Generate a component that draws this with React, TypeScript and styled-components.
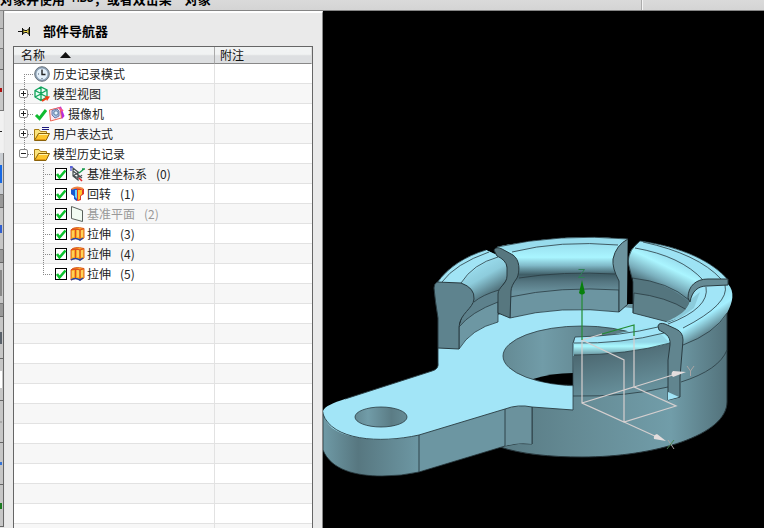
import React from "react";
import styled, { createGlobalStyle } from "styled-components";

const GlobalStyle = createGlobalStyle`
  * { box-sizing: border-box; }
  body {
    margin: 0;
    background: #000;
    color: #222;
    font-family: "Noto Sans CJK SC", sans-serif;
    font-size: 12px;
    line-height: 16px;
  }
`;

const Shell = styled.div`
  display: flex;
  flex-direction: column;
  height: 100vh;
  overflow: hidden;
`;

const PromptBar = styled.header`
  display: flex;
  flex: none;
  height: 11px;
  overflow: hidden;
  background: linear-gradient(#dadada, #d4d4d4);
  border-bottom: 1px solid #858585;
`;

const Prompt = styled.div`
  display: flex;
  align-items: flex-end;
  width: 641px;
  padding-bottom: 3px;
  color: #000;
  font-size: 13px;
  font-weight: 700;
  white-space: pre;
`;

const Divider = styled.div`
  width: 2px;
  background: #f4f4f4;
  border-left: 1px solid #aaa;
`;

const Latin = styled.span`
  font-family: "Liberation Mono", monospace;
  font-size: 12px;
  white-space: pre;
`;

const Workspace = styled.div`
  display: flex;
  flex: 1;
  min-height: 0;
`;

const ToolStrip = styled.nav`
  display: flex;
  flex: none;
  flex-direction: column;
  width: 5px;
  overflow: hidden;
  background: #e6e6e6;
`;

const Tool = styled.button<{ $h: number; $tone: string; $line: string }>`
  display: flex;
  flex: none;
  align-items: center;
  width: 4px;
  height: ${(p) => p.$h}px;
  padding: 0;
  background: ${(p) => p.$tone};
  border: 0;
  border-right: 1px solid ${(p) => p.$line};
  border-bottom: 1px solid ${(p) => p.$line};
`;

const ToolMark = styled.span<{ $h: number; $color: string }>`
  width: 2px;
  height: ${(p) => p.$h}px;
  background: ${(p) => p.$color};
`;

const Navigator = styled.aside`
  display: flex;
  flex: none;
  flex-direction: column;
  width: 318px;
  overflow: hidden;
  background: #eaeaea;
  border-top: 2px solid #fff;
  border-right: 1px solid #888;
`;

const PanelTitle = styled.div`
  display: flex;
  flex: none;
  align-items: center;
  gap: 12px;
  height: 33px;
  padding: 3px 0 0 13px;
`;

const Heading = styled.h1`
  margin: 0;
  color: #000;
  font-size: 13px;
  line-height: 16px;
`;

const PinButton = styled.button`
  display: flex;
  padding: 0;
  background: none;
  border: 0;
`;

const TreeFrame = styled.div`
  flex: 1;
  min-height: 0;
  margin: 0 9px 0 8px;
  overflow: hidden;
  background: #fff;
  border: 1px solid #666;
  border-bottom: 0;
`;

const Tree = styled.table`
  width: 100%;
  table-layout: fixed;
  border-collapse: separate;
  border-spacing: 0;
`;

const HeadCell = styled.th<{ $wide?: boolean }>`
  width: ${(p) => (p.$wide ? "201px" : "auto")};
  height: 17px;
  padding: 0 0 0 ${(p) => (p.$wide ? 7 : 5)}px;
  color: #111;
  font-weight: 400;
  text-align: left;
  background: linear-gradient(#f1f3f3 0 45%, #dddfe1 55% 100%);
  border-right: 1px solid ${(p) => (p.$wide ? "#aaa" : "#ddd")};
  border-bottom: 1px solid #888;
`;

const SortLabel = styled.button`
  display: flex;
  align-items: center;
  gap: 15px;
  height: 16px;
  padding: 0;
  color: inherit;
  font: inherit;
  line-height: 16px;
  background: none;
  border: 0;
`;

const Row = styled.tr`
  background: #fff;
  &:nth-child(even) { background: #f7f7f7; }
`;

const Cell = styled.td<{ $rule?: boolean }>`
  height: 20px;
  padding: 0;
  border-right: ${(p) => (p.$rule ? "1px solid #e2e2e2" : "0")};
  border-bottom: 1px solid #e2e2e2;
`;

const Item = styled.div<{ $muted?: boolean }>`
  display: flex;
  align-items: center;
  height: 19px;
  color: ${(p) => (p.$muted ? "#999" : "#222")};
  white-space: pre;
`;

const FeatureLabel = styled.label`
  display: flex;
  gap: 9px;
`;

const Branch = styled.div<{ $child?: boolean }>`
  display: grid;
  flex: none;
  width: ${(p) => (p.$child ? 41 : 20)}px;
  height: 19px;
  & > * { grid-area: 1 / 1; }
`;

const Expander = styled.button`
  z-index: 1;
  display: flex;
  align-self: center;
  width: 9px;
  height: 9px;
  margin-left: 5px;
  padding: 0;
  background: #fff;
  border: 1px solid #8a8a8a;
  border-radius: 2px;
`;

const IconSlot = styled.span<{ $w: number }>`
  display: flex;
  flex: none;
  width: ${(p) => p.$w}px;
`;

const TickBox = styled.span`
  display: grid;
  flex: none;
  width: 15px;
  & > * { grid-area: 1 / 1; }
  & > svg { pointer-events: none; }
`;

const Check = styled.input`
  appearance: none;
  width: 12px;
  height: 12px;
  margin: 0;
  background: #fff;
  border: 1px solid #000;
`;

const Viewport = styled.main`
  flex: 1;
  min-width: 0;
  overflow: hidden;
  background: #000;
`;

const Scene = styled.svg`
  display: block;
  width: 100%;
  height: 100%;
`;

type Kind = "clock" | "views" | "camera" | "expr" | "folder" | "csys" | "revolve" | "plane" | "extrude";

function TickMark() {
  return (
    <svg width="12" height="12" viewBox="0 0 12 12">
      <path d="M2 6L4.500 9.500L10.500 2.500" fill="none" stroke="#0cc42c" strokeWidth="2.600" />
    </svg>
  );
}

function Folder() {
  return (
    <>
      <path d="M.5 14V3.500H5L6.500 5.500H12.500V9" fill="#fbe47e" stroke="#a87a10" />
      <path d="M.5 14.500L4.500 7.500H15.500L12 14.500Z" fill="#fdc52c" stroke="#8b6108" />
      <path d="M5 8.500H14" stroke="#fff2a8" />
      <path d="M2 13.500H11.500" stroke="#e29a14" />
    </>
  );
}

const art: Record<Kind, React.ReactNode> = {
  clock: (
    <>
      <circle cx="8" cy="8" r="7.300" fill="#8fa3b8" stroke="#68737d" />
      <circle cx="8" cy="8" r="5.500" fill="#e4f0fa" />
      <path d="M8 3.500V8.500H11.500" fill="none" stroke="#222" strokeWidth="1.400" />
      <path d="M4 8H5M8 12V13" stroke="#456" />
    </>
  ),
  views: (
    <>
      <path d="M1 4.500L7 1L13 4V11L7 14.500L1 11ZM1 4.500L7 7.500L13 4M7 1V14M1 11L7 8L13 11" fill="#e8fff3" stroke="#10a35b" strokeWidth="1.300" />
      <path d="M8 15L13 12" stroke="#f33c14" strokeWidth="2" />
      <path d="M11 10L16 10.500L13 15Z" fill="#f33c14" />
    </>
  ),
  camera: (
    <>
      <path d="M4 3L12 .5L15.500 10L13 13Z" fill="#b52be0" />
      <path d="M.5 4L11 1.500L12.500 12L1.500 15Z" fill="#fae6ee" stroke="#ef6654" />
      <path d="M3 4.500L8 3L10 5V10L6 12L3 9Z" fill="#a9c5e7" stroke="#6f78a8" />
      <circle cx="7" cy="7" r="2.200" fill="#e6f4ff" stroke="#58799f" />
      <path d="M10 2L14 5" stroke="#f84f92" strokeWidth="2" />
    </>
  ),
  expr: (
    <>
      <Folder />
      <path d="M8 1.500H15M8 3.500H15" stroke="#1c1a80" />
    </>
  ),
  folder: <Folder />,
  csys: (
    <>
      <path d="M3 2L8 6V14L3 10ZM3 10L9 6M3 5L12 12M4 10Q9 13 12 9" fill="none" stroke="#454d51" strokeWidth="1.200" />
      <path d="M1 0V5M0 1H3" stroke="#2530d0" />
      <path d="M9 7L14 3M12 3H15" stroke="#189b4d" strokeWidth="1.400" />
      <path d="M9 12L12 15" stroke="#e32929" strokeWidth="1.600" />
    </>
  ),
  revolve: (
    <>
      <path d="M1 3Q7 0 14 3V8L11 10V14L8 15L5 14V10L1 8Z" fill="#dc3827" />
      <path d="M1 4Q3 2 7 3V15L4 13V10L1 8Z" fill="#1559d1" />
      <path d="M5 4H7V13L5 11Z" fill="#69d4ff" />
      <path d="M8 4H12V8L10 10V13L8 14Z" fill="#ffc42b" />
      <path d="M2 3Q7 0 13 3" fill="none" stroke="#f18642" strokeWidth="2" />
    </>
  ),
  plane: <path d="M1.500 .5L12.500 4.500V15.500L1.500 12.500Z" fill="#f2fbf2" stroke="#59605b" />,
  extrude: (
    <>
      <path d="M1 4Q4 0 14 2.500V12L10 14Q6 11 1 14Z" fill="#ffba28" stroke="#dd6220" />
      <path d="M5.500 3V12M10 4V13.500M1 4Q5 2 10 4L14 2.500" fill="none" stroke="#dd511e" strokeWidth="1.300" />
      <path d="M3 5V11M8 4V11M12 4V11" stroke="#ffe788" />
      <path d="M1 14Q5 11 10 14L13 12" fill="none" stroke="#1f46ad" strokeWidth="1.500" />
    </>
  ),
};

function NodeIcon({ kind }: { kind: Kind }) {
  return (
    <svg width="16" height="16" viewBox="0 0 16 16">
      {art[kind]}
    </svg>
  );
}

interface TreeNode {
  name: string;
  index?: number;
  kind: Kind;
  child?: boolean;
  state?: "open" | "closed";
  muted?: boolean;
  first?: boolean;
  last?: boolean;
  active?: boolean;
}

const nodes: TreeNode[] = [
  { name: "历史记录模式", kind: "clock", first: true },
  { name: "模型视图", kind: "views", state: "closed" },
  { name: "摄像机", kind: "camera", state: "closed", active: true },
  { name: "用户表达式", kind: "expr", state: "closed" },
  { name: "模型历史记录", kind: "folder", state: "open", last: true },
  { name: "基准坐标系", index: 0, kind: "csys", child: true },
  { name: "回转", index: 1, kind: "revolve", child: true },
  { name: "基准平面", index: 2, kind: "plane", child: true, muted: true },
  { name: "拉伸", index: 3, kind: "extrude", child: true },
  { name: "拉伸", index: 4, kind: "extrude", child: true },
  { name: "拉伸", index: 5, kind: "extrude", child: true, last: true },
];

const blankRows = Array.from({ length: 40 }, (_, i) => i);

function Guide({ node }: { node: TreeNode }) {
  const x = node.child ? 29.5 : 10.5;
  const top = node.first ? 10 : 0;
  const bottom = node.last ? 10 : 19;
  return (
    <svg width={node.child ? 39 : 19} height="19" stroke="#888" strokeDasharray="1 1">
      <path d={`M${x} ${top}V${bottom}`} />
      <path d={`M${x - 0.5} 10.500H${node.child ? 39 : 19}`} />
    </svg>
  );
}

function NodeRow({ node }: { node: TreeNode }) {
  const id = `feature-${node.index}`;
  return (
    <Row>
      <Cell $rule>
        <Item $muted={node.muted}>
          <Branch $child={node.child}>
            <Guide node={node} />
            {node.state && (
              <Expander aria-label={node.name} aria-expanded={node.state === "open"}>
                <svg width="7" height="7" stroke="#222">
                  <path d={node.state === "open" ? "M1 3.500H6" : "M1 3.500H6M3.500 1V6"} />
                </svg>
              </Expander>
            )}
          </Branch>
          {node.child && (
            <TickBox>
              <Check id={id} type="checkbox" defaultChecked />
              <TickMark />
            </TickBox>
          )}
          {node.active && (
            <IconSlot $w={15}>
              <svg width="14" height="14" viewBox="0 0 14 14">
                <path d="M2 8L5.500 11.500L12 3" fill="none" stroke="#10bb30" strokeWidth="3" />
              </svg>
            </IconSlot>
          )}
          <IconSlot $w={node.child ? 17 : 19}>
            <NodeIcon kind={node.kind} />
          </IconSlot>
          {node.child ? (
            <FeatureLabel htmlFor={id}>
              <span>{node.name}</span>
              <span>{`(${node.index})`}</span>
            </FeatureLabel>
          ) : (
            <span>{node.name}</span>
          )}
        </Item>
      </Cell>
      <Cell />
    </Row>
  );
}

const tools = [
  { h: 18, tone: "#bdbdbd", line: "#777" },
  { h: 20, tone: "#c6c6c6", line: "#777" },
  { h: 21, tone: "#bcbcbc", line: "#666" },
  { h: 41, tone: "#c8c8c8", line: "#777", mark: "#b01010", mh: 4 },
  { h: 42, tone: "#f1f1f1", line: "#eee", mark: "#222", mh: 1 },
  { h: 42, tone: "#c9cdd2", line: "#777", mark: "#1668e3", mh: 18 },
  { h: 13, tone: "#999", line: "#666" },
  { h: 42, tone: "#c6c6c6", line: "#777", mark: "#315fd0", mh: 8 },
  { h: 13, tone: "#999", line: "#666" },
  { h: 41, tone: "#c6c6c6", line: "#777", mark: "#888", mh: 26 },
  { h: 13, tone: "#999", line: "#666" },
  { h: 42, tone: "#c6c6c6", line: "#666", mark: "#59616a", mh: 12 },
  { h: 42, tone: "#c6c6c6", line: "#666", mark: "#fff", mh: 17 },
  { h: 42, tone: "#c6c6c6", line: "#666", mark: "#aaa", mh: 2 },
  { h: 42, tone: "#c6c6c6", line: "#666", mark: "#3474d8", mh: 3 },
  { h: 42, tone: "#c6c6c6", line: "#666", mark: "#197b20", mh: 6 },
];

function Model() {
  return (
    <Scene viewBox="323 11 441 517" preserveAspectRatio="xMinYMin meet" role="img" aria-label="模型">
      <defs>
        <linearGradient id="body" gradientUnits="userSpaceOnUse" x1="500" y1="0" x2="728" y2="0">
          <stop offset="0" stopColor="#587a83" />
          <stop offset=".35" stopColor="#658b95" />
          <stop offset=".75" stopColor="#719da9" />
          <stop offset="1" stopColor="#52717a" />
        </linearGradient>
        <linearGradient id="arm" gradientUnits="userSpaceOnUse" x1="323" y1="0" x2="440" y2="0">
          <stop offset="0" stopColor="#6f9aa6" />
          <stop offset=".3" stopColor="#577780" />
          <stop offset=".8" stopColor="#6c96a2" />
          <stop offset="1" stopColor="#6c96a2" />
        </linearGradient>
        <linearGradient id="bore" x1="0" x2="1">
          <stop offset="0" stopColor="#648a94" />
          <stop offset=".25" stopColor="#719ca8" />
          <stop offset=".7" stopColor="#5b7c85" />
          <stop offset="1" stopColor="#658b95" />
        </linearGradient>
        <linearGradient id="lip" gradientUnits="userSpaceOnUse" x1="0" y1="241" x2="0" y2="292">
          <stop offset="0" stopColor="#96d9ea" />
          <stop offset=".32" stopColor="#a9f5ff" />
          <stop offset=".48" stopColor="#80b9c8" />
          <stop offset=".66" stopColor="#3f5d66" />
          <stop offset=".8" stopColor="#557681" />
          <stop offset="1" stopColor="#6a929e" />
        </linearGradient>
        <linearGradient id="leftLip" gradientUnits="userSpaceOnUse" x1="473" y1="263" x2="492" y2="296">
          <stop offset="0" stopColor="#9de0f1" />
          <stop offset=".45" stopColor="#8dccdc" />
          <stop offset="1" stopColor="#48656e" />
        </linearGradient>
        <linearGradient id="rightLip" gradientUnits="userSpaceOnUse" x1="670" y1="255" x2="653" y2="291">
          <stop offset="0" stopColor="#96d9ea" />
          <stop offset=".3" stopColor="#aaf5ff" />
          <stop offset=".65" stopColor="#7aafbd" />
          <stop offset="1" stopColor="#3e5962" />
        </linearGradient>
        <linearGradient id="frontLip" gradientUnits="userSpaceOnUse" x1="0" y1="342" x2="0" y2="356">
          <stop offset="0" stopColor="#93d8e8" />
          <stop offset=".3" stopColor="#aaf9ff" />
          <stop offset="1" stopColor="#638994" />
        </linearGradient>
        <linearGradient id="outerLip" gradientUnits="userSpaceOnUse" x1="704" y1="306" x2="718" y2="328">
          <stop offset="0" stopColor="#9be5f5" />
          <stop offset=".35" stopColor="#a4efff" />
          <stop offset="1" stopColor="#587983" />
        </linearGradient>
        <linearGradient id="frontWall" gradientUnits="userSpaceOnUse" x1="600" y1="350" x2="610" y2="396">
          <stop offset="0" stopColor="#4c6871" />
          <stop offset="1" stopColor="#67909b" />
        </linearGradient>
      </defs>

      {/* lower drum and arm walls */}
      <path d="M500 400V447C521 454 550 457 582 457C655 457 727 435 727 402V300H573Z" fill="url(#body)" stroke="#253338" />
      <path d="M323 414V450C331 470 356 476 382 476Q402 476 419 472L505 446Q519 442 532 444V405L440 390Z" fill="url(#arm)" stroke="#253338" strokeWidth=".8" />
      <path d="M505 407H532V444Q519 442 505 446Z" fill="#6b929d" />

      {/* top plate */}
      <path d="M323 411C325 406 333 403 345 399L432 371Q439 369 438 363V340C450 320 520 306 582 309C625 302 662 312 680 325V345L573 341V410L532 407Q518 404 505 409L419 435C390 443 350 441 332 428Q324 421 323 411Z" fill="#a2e5f7" />
      <path d="M345 399L432 371Q439 369 438 363V348M323 414C332 440 379 444 419 435L505 409Q518 404 532 407L573 410M419 435V472M505 409V446M532 407V444" fill="none" stroke="#293b41" strokeWidth=".9" />
      <ellipse cx="381" cy="417" rx="26" ry="10" fill="url(#bore)" stroke="#293b41" strokeWidth=".8" />
      <ellipse cx="582" cy="356" rx="79" ry="30" fill="url(#bore)" stroke="#293b41" strokeWidth=".8" />
      <path d="M533 379Q551 373 573 373V385Q551 385 533 379Z" fill="#000" />

      {/* left ring segment */}
      <path d="M459 327L470 290L500 280V304Q471 314 459 330Z" fill="#5d818c" />
      <path d="M459 327Q471 312 498 302V322Q471 329 459 349Z" fill="#6d97a3" stroke="#293b41" strokeWidth=".8" />
      <path d="M437 283C448 267 466 256 486 250L495 254Q507 258 507 268V279L499 290Q482 294 473 303L461 283Z" fill="url(#leftLip)" />
      <path d="M437 283C448 267 466 256 486 250L500 257Q478 263 461 283Z" fill="#a1e4f5" />
      <path d="M437 283C448 267 466 256 486 250M442 282Q455 264 489 252M461 283Q473 264 498 257M474 302Q482 295 499 290" fill="none" stroke="#293b41" strokeWidth=".8" />
      <path d="M438 348V318Q435 300 434 288Q434 284 437 282L461 283Q475 288 474 299C473 309 460 313 459 327V349Z" fill="#5e838e" stroke="#293b41" />

      {/* rear ring segment */}
      <path d="M497 247Q560 233 628 239L619 250V312Q560 305 510 318V285L519 268Z" fill="url(#lip)" />
      <path d="M497 247Q560 233 628 239L618 245Q560 240 514 252Z" fill="#98dced" />
      <path d="M510 297Q560 286 619 290V312Q560 305 510 318Z" fill="#6c95a1" stroke="#293b41" strokeWidth=".8" />
      <path d="M497 247Q560 233 628 239M512 252Q560 240 618 245M519 278Q562 271 615 274" fill="none" stroke="#293b41" strokeWidth=".8" />
      <path d="M494 250Q496 246 502 249L513 255C520 260 520 271 517 278Q511 286 511 291L510 318L498 313V294C498 287 507 284 507 276V267Q506 260 497 256Z" fill="#57777f" stroke="#293b41" />
      <path d="M628 239V304L619 312V281Q612 268 613 259Q616 245 628 239Z" fill="#6c939e" stroke="#293b41" />
      <path d="M628 239L640 241L630 252L629 265L633 280V304H627Z" fill="#000" />

      {/* right ring, outer band */}
      <path d="M707 287L728 284C735 292 733 302 727 313C718 330 701 339 682 345L660 346L573 356V343L662 324Q690 315 705 297Z" fill="url(#outerLip)" />
      <path d="M690 300Q695 285 706 284L725 285Q730 305 683 328L668 324L658 328L662 323Q683 314 690 300Z" fill="#a1e5f7" />
      <path d="M633 277Q670 281 691 302Q683 316 668 322L633 313Z" fill="#54757e" />
      <path d="M634 293Q667 297 687 310Q680 318 668 322L633 313Z" fill="#5e818a" stroke="#293b41" strokeWidth=".8" />
      <path d="M640 241C683 247 713 262 728 280L703 281Q692 284 688 298L690 303Q668 282 632 278Q625 258 632 249Z" fill="url(#rightLip)" />
      <path d="M640 241C683 247 713 262 728 280L703 281Q681 257 635 248Z" fill="#9de2f3" />
      <path d="M690 300C688 312 676 317 664 323L680 318L694 308L700 292Z" fill="#8bcbdb" />
      <path d="M640 241Q629 249 628 262L633 282V313M640 241C683 247 713 262 728 280M643 242Q698 254 721 279M635 248Q681 256 703 280M632 278Q669 282 689 300M706 287Q710 308 668 324M725 285Q730 304 683 328" fill="none" stroke="#293b41" strokeWidth=".8" />
      <path d="M728 279H708C696 279 688 286 688 298L690 302C692 291 698 286 707 286L728 285Z" fill="#668b95" stroke="#293b41" />

      {/* front ring segment */}
      <path d="M574 355Q627 355 670 343V387Q627 397 573 396Z" fill="url(#frontWall)" />
      <path d="M574 343Q623 344 661 334L670 343Q627 355 574 355Z" fill="url(#frontLip)" />
      <path d="M575 337Q622 336 658 327L666 332Q622 344 574 343Z" fill="#a1e5f7" />
      <path d="M575 337Q622 336 658 327M574 343Q622 344 664 333M574 355Q627 355 670 343M573 396Q627 397 668 387M575 337L573 343V410M683 345Q715 333 727 313M681 382Q719 370 727 350" fill="none" stroke="#293b41" strokeWidth=".8" />
      <path d="M658 326Q659 322 665 324L676 329Q683 332 683 340L680 377V397L668 400V360L670 345C671 335 664 333 659 330Z" fill="#61858f" stroke="#293b41" />
      <path d="M668 392L679 397L668 400Z" fill="#a2e5f7" />

      {/* datum coordinate system */}
      <g fill="none" stroke="#d5cfcf" strokeWidth="1.200">
        <path d="M582 340V403L624 422L676 406L634 387L582 403M582 340L624 360V422M634 387V335M582 340L602 334" />
        <path d="M634 387L676 374M624 422L657 437" />
      </g>
      <path d="M582 293V340M602 334L634 325V336" fill="none" stroke="#218b31" strokeWidth="1.200" />
      <path d="M582 280L579 293Q582 296 585 293Z" fill="#07800c" />
      <path d="M686 372L673 371Q670 374 673 377Z" fill="#e3dddd" />
      <path d="M666 441L657 434Q653 435 654 439Z" fill="#e3dddd" />
      <path d="M578.500 269.500H584.500L578.500 277.500H584.500" fill="none" stroke="#2d8054" />
      <path d="M687 366L690.500 371L694 366M690.500 371V376" fill="none" stroke="#aaa5a5" />
      <path d="M668 440L674 449" fill="none" stroke="#aaa5a5" />
      <path d="M674 440L667 449" fill="none" stroke="#478250" />
    </Scene>
  );
}

export default function App() {
  return (
    <Shell>
      <GlobalStyle />
      <PromptBar>
        <Prompt>
          对象并使用<Latin> MB3</Latin>，或者双击某一对象
        </Prompt>
        <Divider />
      </PromptBar>
      <Workspace>
        <ToolStrip>
          {tools.map((t, i) => (
            <Tool key={i} $h={t.h} $tone={t.tone} $line={t.line} aria-label={`工具 ${i + 1}`}>
              {t.mark && <ToolMark $h={t.mh} $color={t.mark} />}
            </Tool>
          ))}
        </ToolStrip>
        <Navigator>
          <PanelTitle>
            <PinButton aria-label="固定">
              <svg width="13" height="9" viewBox="0 0 13 9">
                <path d="M0 4.500H5M4.500 1V8M11.500 0V9" stroke="#111" />
                <path d="M5 2.500L7 3.500H9L11 1.500V7.500L9 5.500H7L5 6.500Z" fill="#e9d646" stroke="#111" />
              </svg>
            </PinButton>
            <Heading>部件导航器</Heading>
          </PanelTitle>
          <TreeFrame>
            <Tree>
              <thead>
                <tr>
                  <HeadCell $wide aria-sort="ascending">
                    <SortLabel>
                      名称
                      <svg width="11" height="6">
                        <path d="M0 6L5.500 0L11 6Z" fill="#111" />
                      </svg>
                    </SortLabel>
                  </HeadCell>
                  <HeadCell>附注</HeadCell>
                </tr>
              </thead>
              <tbody>
                {nodes.map((n, i) => (
                  <NodeRow key={i} node={n} />
                ))}
                {blankRows.map((i) => (
                  <Row key={i}>
                    <Cell $rule />
                    <Cell />
                  </Row>
                ))}
              </tbody>
            </Tree>
          </TreeFrame>
        </Navigator>
        <Viewport>
          <Model />
        </Viewport>
      </Workspace>
    </Shell>
  );
}
